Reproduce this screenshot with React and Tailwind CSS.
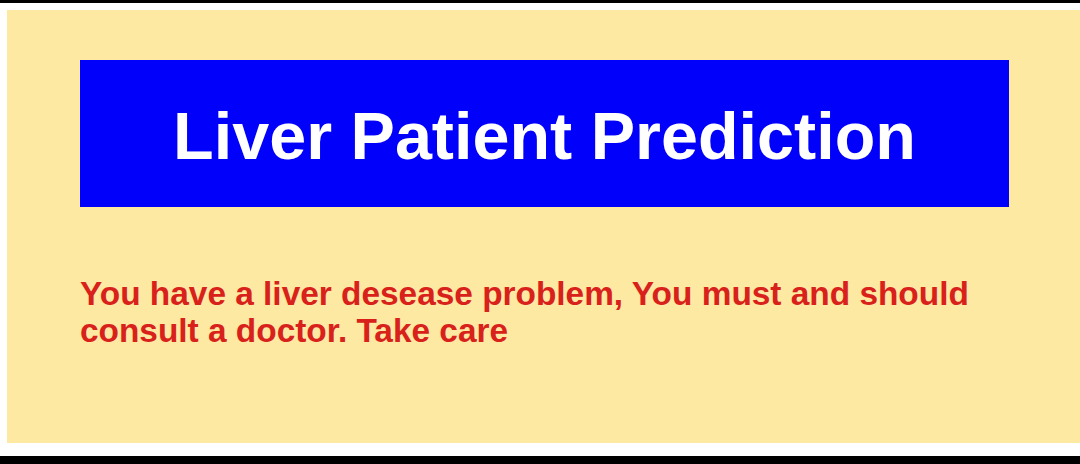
import React from 'react';

const App = () => {
  return (
    <div className="h-[464px] w-[1080px] bg-black flex flex-col overflow-hidden" style={{ fontFamily: '"Liberation Sans", Arial, sans-serif' }}>
      <div className="h-[3px] shrink-0 bg-black" />
      <div className="flex-1 bg-white pl-[7px] pt-[7px] pb-[13px] flex">
        <div className="flex-1 bg-[#fee9a2] pl-[73px] pt-[50px]">
          <div className="w-[929px] h-[147px] bg-[#0000fb] pt-[27px] text-center">
            <h1 className="text-white font-bold text-[66.5px] leading-normal">Liver Patient Prediction</h1>
          </div>
          <p className="mt-[68px] w-[929px] text-[#d9211b] font-bold text-[33.4px] leading-[37px]">
            You have a liver desease problem, You must and should consult a doctor. Take care
          </p>
        </div>
      </div>
      <div className="h-[8px] shrink-0 bg-black" />
    </div>
  );
};

export default App;
